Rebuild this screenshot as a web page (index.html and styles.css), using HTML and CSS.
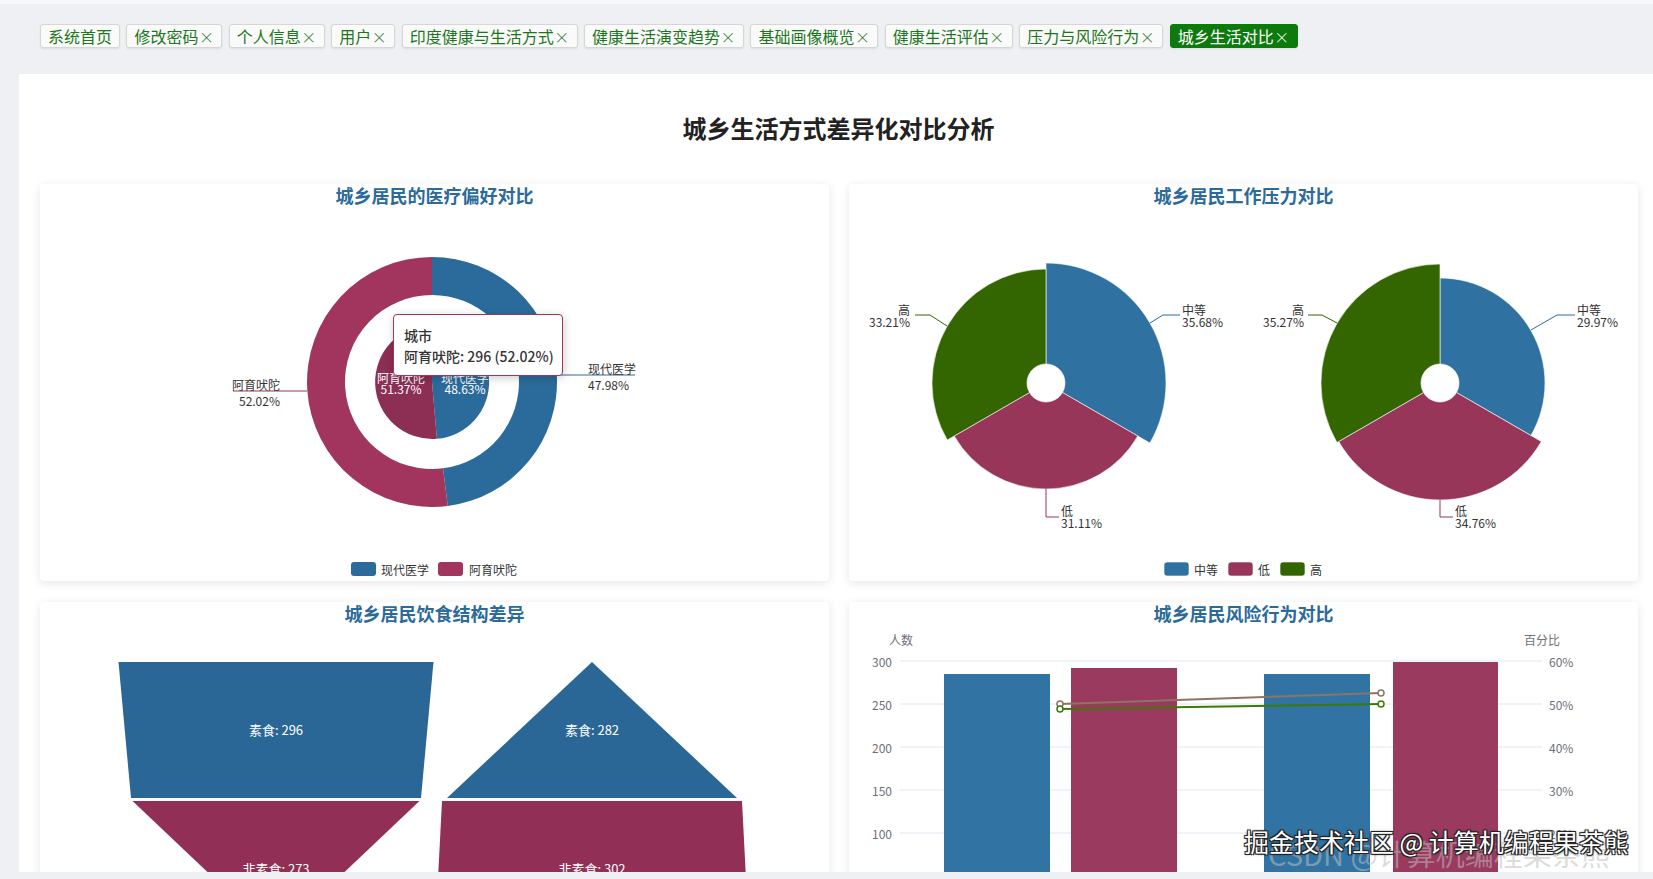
FILE: index.html
```html
<!DOCTYPE html>
<html>
<head>
  <meta charset="utf-8">
  <title>城乡生活对比</title>
  <link rel="stylesheet" href="styles.css">
</head>
<body>

  <div class="tabs">
    <span class="tab">系统首页</span>
    <span class="tab">修改密码<span class="close">×</span></span>
    <span class="tab">个人信息<span class="close">×</span></span>
    <span class="tab">用户<span class="close">×</span></span>
    <span class="tab">印度健康与生活方式<span class="close">×</span></span>
    <span class="tab">健康生活演变趋势<span class="close">×</span></span>
    <span class="tab">基础画像概览<span class="close">×</span></span>
    <span class="tab">健康生活评估<span class="close">×</span></span>
    <span class="tab">压力与风险行为<span class="close">×</span></span>
    <span class="tab active">城乡生活对比<span class="close">×</span></span>
  </div>

  <div class="panel">
    <h2 class="page-title">城乡生活方式差异化对比分析</h2>

    <div class="grid">

      <!-- 医疗偏好 -->
      <div class="card">
        <h3 class="card-title">城乡居民的医疗偏好对比</h3>
        <svg class="chart" width="789" height="373" viewBox="0 24 789 373">
          <path class="c1-blue" d="M392 73 A125 125 0 0 1 407.8 322 L403 284.3 A87 87 0 0 0 392 111 Z"/>
          <path class="c1-red" d="M407.8 322 A125 125 0 1 1 392 73 L392 111 A87 87 0 1 0 403 284.3 Z"/>
          <path class="c1-blue" d="M392 198 L392 141 A57 57 0 0 1 396.9 254.8 Z"/>
          <path class="c1-red-dark" d="M392 198 L396.9 254.8 A57 57 0 1 1 392 141 Z"/>

          <text class="inside" x="361" y="193">阿育吠陀</text>
          <text class="inside" x="361" y="204">51.37%</text>
          <text class="inside" x="425" y="193">现代医学</text>
          <text class="inside" x="425" y="204">48.63%</text>

          <polyline class="ln-blue" points="517,191 595,191"/>
          <text class="lbl" x="548" y="184">现代医学</text>
          <text class="lbl" x="548" y="200">47.98%</text>
          <polyline class="ln-red" points="267,207 193,207"/>
          <text class="lbl end" x="240" y="200">阿育吠陀</text>
          <text class="lbl end" x="240" y="216">52.02%</text>

          <rect class="c1-blue" x="311" y="378" width="25" height="14" rx="3"/>
          <text class="lbl" x="341" y="385">现代医学</text>
          <rect class="c1-red" x="398" y="378" width="25" height="14" rx="3"/>
          <text class="lbl" x="429" y="385">阿育吠陀</text>
        </svg>
        <div class="tooltip">
          <div>城市</div>
          <div>阿育吠陀: 296 (52.02%)</div>
        </div>
      </div>

      <!-- 工作压力 -->
      <div class="card">
        <h3 class="card-title">城乡居民工作压力对比</h3>
        <svg class="chart" width="789" height="373" viewBox="0 24 789 373">
          <path class="s-blue" d="M197 79 A120 120 0 0 1 300.92 259 L213.45 208.5 A19 19 0 0 0 197 180 Z"/>
          <path class="s-red" d="M288.8 252 A106 106 0 0 1 105.2 252 L180.55 208.5 A19 19 0 0 0 213.45 208.5 Z"/>
          <path class="s-green" d="M98.27 256 A114 114 0 0 1 197 85 L197 180 A19 19 0 0 0 180.55 208.5 Z"/>

          <polyline class="ln-blue" points="301,139 314,131 331,131"/>
          <text class="lbl" x="333" y="125">中等</text>
          <text class="lbl" x="333" y="137">35.68%</text>
          <polyline class="ln-green" points="98,142 81,131 66,131"/>
          <text class="lbl end" x="61" y="125">高</text>
          <text class="lbl end" x="61" y="137">33.21%</text>
          <polyline class="ln-red" points="197,305 197,333 210,333"/>
          <text class="lbl" x="212" y="326">低</text>
          <text class="lbl" x="212" y="338">31.11%</text>

          <path class="s-blue" d="M591 94 A105 105 0 0 1 681.93 251.5 L607.45 208.5 A19 19 0 0 0 591 180 Z"/>
          <path class="s-red" d="M692.32 257.5 A117 117 0 0 1 489.68 257.5 L574.55 208.5 A19 19 0 0 0 607.45 208.5 Z"/>
          <path class="s-green" d="M487.94 258.5 A119 119 0 0 1 591 80 L591 180 A19 19 0 0 0 574.55 208.5 Z"/>

          <polyline class="ln-blue" points="682,146 708,131 726,131"/>
          <text class="lbl" x="728" y="125">中等</text>
          <text class="lbl" x="728" y="137">29.97%</text>
          <polyline class="ln-green" points="488,139 473,131 459,131"/>
          <text class="lbl end" x="455" y="125">高</text>
          <text class="lbl end" x="455" y="137">35.27%</text>
          <polyline class="ln-red" points="591,316 591,333 604,333"/>
          <text class="lbl" x="606" y="326">低</text>
          <text class="lbl" x="606" y="338">34.76%</text>

          <rect class="s-blue" x="315" y="378" width="25" height="14" rx="3"/>
          <text class="lbl" x="345" y="385">中等</text>
          <rect class="s-red" x="379" y="378" width="25" height="14" rx="3"/>
          <text class="lbl" x="409" y="385">低</text>
          <rect class="s-green" x="431" y="378" width="25" height="14" rx="3"/>
          <text class="lbl" x="461" y="385">高</text>
        </svg>
      </div>

      <!-- 饮食结构 -->
      <div class="card">
        <h3 class="card-title">城乡居民饮食结构差异</h3>
        <svg class="chart" width="789" height="373" viewBox="0 24 789 373">
          <polygon class="f-blue" points="78.5,60 393.5,60 381,196 91,196"/>
          <polygon class="f-red" points="92.5,199 379.5,199 236,335"/>
          <text class="inside big" x="236" y="127">素食: 296</text>
          <text class="inside big" x="236" y="266">非素食: 273</text>

          <polygon class="f-blue" points="552,60 697,196 407,196"/>
          <polygon class="f-red" points="402,199 702,199 709,335 395,335"/>
          <text class="inside big" x="552" y="127">素食: 282</text>
          <text class="inside big" x="552" y="266">非素食: 302</text>
        </svg>
      </div>

      <!-- 风险行为 -->
      <div class="card">
        <h3 class="card-title">城乡居民风险行为对比</h3>
        <svg class="chart" width="789" height="373" viewBox="0 24 789 373">
          <text class="axis mid" x="52" y="37">人数</text>
          <text class="axis mid" x="693" y="37">百分比</text>

          <g class="grid-lines">
            <line x1="51" y1="59" x2="693" y2="59"/>
            <line x1="51" y1="102" x2="693" y2="102"/>
            <line x1="51" y1="145" x2="693" y2="145"/>
            <line x1="51" y1="188" x2="693" y2="188"/>
            <line x1="51" y1="231" x2="693" y2="231"/>
            <line x1="51" y1="274" x2="693" y2="274"/>
          </g>

          <text class="axis end" x="43" y="59">300</text>
          <text class="axis end" x="43" y="102">250</text>
          <text class="axis end" x="43" y="145">200</text>
          <text class="axis end" x="43" y="188">150</text>
          <text class="axis end" x="43" y="231">100</text>
          <text class="axis end" x="43" y="274">50</text>

          <text class="axis" x="700" y="59">60%</text>
          <text class="axis" x="700" y="102">50%</text>
          <text class="axis" x="700" y="145">40%</text>
          <text class="axis" x="700" y="188">30%</text>
          <text class="axis" x="700" y="231">20%</text>
          <text class="axis" x="700" y="274">10%</text>

          <rect class="b-blue" x="95" y="72" width="106" height="245"/>
          <rect class="b-red" x="222" y="66" width="106" height="251"/>
          <rect class="b-blue" x="415" y="72" width="106" height="245"/>
          <rect class="b-red" x="544" y="60" width="105" height="257"/>

          <line class="l-brown" x1="211" y1="102" x2="532" y2="91"/>
          <line class="l-green" x1="211" y1="107" x2="532" y2="102"/>
          <circle class="p-brown" cx="211" cy="102" r="3"/>
          <circle class="p-brown" cx="532" cy="91" r="3"/>
          <circle class="p-green" cx="211" cy="107" r="3"/>
          <circle class="p-green" cx="532" cy="102" r="3"/>
        </svg>
      </div>

    </div>
  </div>

  <div class="wm-back">CSDN @计算机编程果茶熊</div>
  <div class="wm-front">掘金技术社区 @ 计算机编程果茶熊</div>

</body>
</html>
```

FILE: styles.css
```css
* {
    box-sizing: border-box;
}

body {
    margin: 0;
    height: 879px;
    overflow: hidden;
    position: relative;
    background: #eef0f3;
    font-family: "Noto Sans CJK SC", "Microsoft YaHei", sans-serif;
    border-top: 4px solid #f8f9fa;
}

/* tab bar */
.tabs {
    display: flex;
    gap: 6.4px;
    padding: 20px 0 0 40px;
}

.tab {
    height: 24px;
    padding: 0 7px;
    border: 1px solid #d3d8d3;
    border-radius: 3px;
    background: #f9faf9;
    color: #1c761c;
    font-size: 16px;
    line-height: 22px;
    white-space: nowrap;
    box-shadow: 0 1px 2px rgba(0, 0, 0, 0.08);
}

.tab .close {
    display: inline-block;
    width: 16px;
    text-align: center;
    font-size: 15px;
    font-weight: 300;
}

.tab.active {
    background: #0d7a0d;
    border-color: #0d7a0d;
    color: #fff;
}

/* content panel */
.panel {
    margin: 26px 0 0 19px;
    height: 798px;
    overflow: hidden;
    background: #fff;
    padding: 0 16px 0 21px;
}

.page-title {
    margin: 38px 0 40px;
    font-size: 24px;
    line-height: 32px;
    text-align: center;
    color: #222;
    font-weight: bold;
}

.grid {
    display: grid;
    grid-template-columns: 789px 789px;
    column-gap: 20px;
    row-gap: 21px;
}

.card {
    position: relative;
    height: 397px;
    background: #fff;
    border-radius: 4px;
    box-shadow: 0 2px 10px rgba(0, 0, 0, 0.1);
}

.card-title {
    margin: 0;
    font-size: 18px;
    line-height: 22px;
    height: 24px;
    text-align: center;
    color: #2c6a99;
    font-weight: bold;
}

.chart {
    display: block;
}

.chart text {
    font-family: "Noto Sans CJK SC", "Microsoft YaHei", sans-serif;
    font-size: 12px;
    dominant-baseline: central;
}

.lbl {
    fill: #333;
}

.end {
    text-anchor: end;
}

.mid {
    text-anchor: middle;
}

.inside {
    fill: #fff;
    font-size: 13px;
    text-anchor: middle;
}

.chart .big {
    font-size: 13px;
}

/* series colours */
.c1-blue { fill: #2b6b9b; }
.c1-red { fill: #a2355e; }
.c1-red-dark { fill: #8d2e55; }

.s-blue { fill: #2f72a2; stroke: #fff; stroke-width: 0.6; }
.s-red { fill: #973659; stroke: #fff; stroke-width: 0.6; }
.s-green { fill: #336600; stroke: #fff; stroke-width: 0.6; }

.ln-blue, .ln-red, .ln-green {
    fill: none;
    stroke-width: 1;
}
.ln-blue { stroke: #2f6a96; }
.ln-red { stroke: #973659; }
.ln-green { stroke: #336600; }

.f-blue { fill: #2a6796; }
.f-red { fill: #912f56; }

.b-blue { fill: #3174a3; }
.b-red { fill: #9a3a5e; }

.grid-lines line {
    stroke: #e0e6f1;
    stroke-width: 1;
}

.axis {
    fill: #6e7079;
}

.l-brown { stroke: #8f7363; stroke-width: 2; }
.l-green { stroke: #3a7a05; stroke-width: 2; }
.p-brown { fill: #fff; stroke: #8f7363; stroke-width: 1.5; }
.p-green { fill: #fff; stroke: #3a7a05; stroke-width: 1.5; }

/* tooltip over the pie */
.tooltip {
    position: absolute;
    left: 353px;
    top: 130px;
    width: 170px;
    height: 62px;
    padding: 10px 10px 0;
    background: #fff;
    border: 1px solid #a2355e;
    border-radius: 4px;
    box-shadow: 1px 2px 10px rgba(0, 0, 0, 0.2);
    font-size: 14px;
    font-weight: 500;
    line-height: 21px;
    color: #333;
    white-space: nowrap;
}

/* watermarks */
.wm-back {
    position: absolute;
    left: 1268px;
    top: 828px;
    font-size: 29px;
    color: rgba(190, 190, 190, 0.55);
    white-space: nowrap;
}

.wm-front {
    position: absolute;
    left: 1244px;
    top: 819px;
    font-size: 25px;
    color: #fff;
    white-space: nowrap;
    text-shadow: 1px 1px 0 #222, -1px -1px 0 #222, 1px -1px 0 #222, -1px 1px 0 #222, 0 0 3px #000;
}
```
